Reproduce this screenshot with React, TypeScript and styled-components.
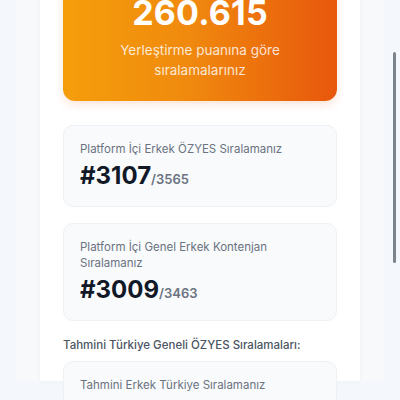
import styled, { createGlobalStyle } from "styled-components";

const GlobalStyle = createGlobalStyle`
  html, body {
    margin: 0;
    padding: 0;
    background: #f4f8fc;
    font-family: Inter, "Noto Sans", "Liberation Sans", sans-serif;
    overflow: hidden;
  }
`;

const Screen = styled.div`
  position: relative;
  width: 400px;
  height: 400px;
  overflow: hidden;
  padding: 0 16px;
  box-sizing: border-box;
  background: #f4f8fc;
`;

const Shell = styled.div`
  height: 100%;
  padding: 0 24px;
  background: #f8f9fa;
`;

const Panel = styled.div`
  height: 100%;
  padding: 0 23px;
  background: #ffffff;
  box-shadow: 0 0 6px rgba(15, 23, 42, 0.04);
`;

const Content = styled.div`
  display: flex;
  flex-direction: column;
  margin-top: -19px;
`;

const ScoreCard = styled.div`
  display: flex;
  flex-direction: column;
  align-items: center;
  padding: 12px 24px 21px;
  border-radius: 12px;
  background: linear-gradient(90deg, #f59e0b 0%, #f08a0e 45%, #e8570c 100%);
  box-shadow: 0 4px 8px rgba(234, 88, 12, 0.15);
  color: #ffffff;
  text-align: center;
`;

const Score = styled.div`
  font-size: 34px;
  line-height: 40px;
  font-weight: 700;
  letter-spacing: 0.2px;
`;

const ScoreNote = styled.div`
  margin-top: 7px;
  font-size: 13.5px;
  line-height: 20px;
  color: rgba(255, 255, 255, 0.82);
`;

const RankCard = styled.div<{ $gap?: number }>`
  margin-top: ${(p) => p.$gap ?? 16}px;
  padding: 15px 16px 14px;
  border: 1px solid #eef1f5;
  border-radius: 10px;
  background: #f8fafc;
`;

const RankLabel = styled.div`
  font-size: 11.5px;
  line-height: 16px;
  color: #6b7280;
  padding-right: 20px;
`;

const RankValue = styled.div`
  margin-top: 3px;
  font-size: 24px;
  line-height: 32px;
  height: 32px;
  font-weight: 700;
  color: #111827;
`;

const RankTotal = styled.span`
  font-size: 13px;
  line-height: 1;
  font-weight: 600;
  color: #6b7280;
`;

const SectionTitle = styled.div`
  margin-top: 16px;
  font-size: 11.5px;
  line-height: 16px;
  font-weight: 500;
  color: #4b5563;
`;

const ScrollThumb = styled.div`
  position: absolute;
  right: 4px;
  top: 52px;
  width: 3px;
  height: 211px;
  border-radius: 2px;
  background: #7d838b;
`;

export default function App() {
  return (
    <>
      <GlobalStyle />
      <Screen>
        <Shell>
          <Panel>
            <Content>
              <ScoreCard>
                <Score>260.615</Score>
                <ScoreNote>
                  Yerleştirme puanına göre
                  <br />
                  sıralamalarınız
                </ScoreNote>
              </ScoreCard>
              <RankCard $gap={24}>
                <RankLabel>Platform İçi Erkek ÖZYES Sıralamanız</RankLabel>
                <RankValue>
                  #3107<RankTotal>/3565</RankTotal>
                </RankValue>
              </RankCard>
              <RankCard>
                <RankLabel>Platform İçi Genel Erkek Kontenjan Sıralamanız</RankLabel>
                <RankValue>
                  #3009<RankTotal>/3463</RankTotal>
                </RankValue>
              </RankCard>
              <SectionTitle>Tahmini Türkiye Geneli ÖZYES Sıralamaları:</SectionTitle>
              <RankCard $gap={8}>
                <RankLabel>Tahmini Erkek Türkiye Sıralamanız</RankLabel>
                <RankValue>
                  #2890<RankTotal>/3400</RankTotal>
                </RankValue>
              </RankCard>
            </Content>
          </Panel>
        </Shell>
        <ScrollThumb />
      </Screen>
    </>
  );
}
